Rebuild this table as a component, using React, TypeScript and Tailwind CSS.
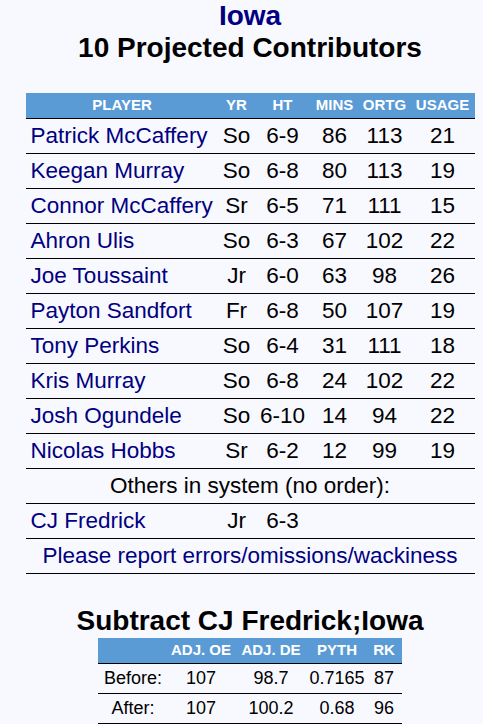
import React from "react";

const players: [string, string, string, string, string, string][] = [
  ["Patrick McCaffery", "So", "6-9", "86", "113", "21"],
  ["Keegan Murray", "So", "6-8", "80", "113", "19"],
  ["Connor McCaffery", "Sr", "6-5", "71", "111", "15"],
  ["Ahron Ulis", "So", "6-3", "67", "102", "22"],
  ["Joe Toussaint", "Jr", "6-0", "63", "98", "26"],
  ["Payton Sandfort", "Fr", "6-8", "50", "107", "19"],
  ["Tony Perkins", "So", "6-4", "31", "111", "18"],
  ["Kris Murray", "So", "6-8", "24", "102", "22"],
  ["Josh Ogundele", "So", "6-10", "14", "94", "22"],
  ["Nicolas Hobbs", "Sr", "6-2", "12", "99", "19"],
];

const colW = ["w-[193px]", "w-[36px]", "w-[56px]", "w-[48px]", "w-[52px]", "w-[64px]"];
const sColW = ["w-[70px]", "w-[66px]", "w-[74px]", "w-[58px]", "w-[36px]"];

export default function App() {
  return (
    <div
      className="w-[483px] h-[724px] overflow-hidden bg-[#f8f8ff] text-black"
      style={{ fontFamily: '"Liberation Sans", Arial, sans-serif' }}
    >
      <div className="w-[500px] flex flex-col items-center">
        <div className="text-[28px] leading-[32px] font-bold text-[#000080] text-center">Iowa</div>
        <div className="text-[28px] leading-[32px] font-bold text-black text-center">10 Projected Contributors</div>

        <div className="mt-[29px] w-[449px] flex flex-col">
          <div className="flex h-[26px] bg-[#5b9bd5] border-b border-black text-white font-bold text-[15px] uppercase">
            {["Player", "Yr", "Ht", "Mins", "ORtg", "Usage"].map((h, i) => (
              <div key={h} className={`${colW[i]} flex items-center justify-center whitespace-nowrap`}>
                {h}
              </div>
            ))}
          </div>
          {players.map((p) => (
            <div key={p[0]} className="flex h-[35px] border-b border-black text-[22.5px]">
              <div className={`${colW[0]} flex items-center pl-[5px] text-[#000080] whitespace-nowrap`}>{p[0]}</div>
              {p.slice(1).map((v, i) => (
                <div key={i} className={`${colW[i + 1]} flex items-center justify-center whitespace-nowrap`}>
                  {v}
                </div>
              ))}
            </div>
          ))}
          <div className="flex h-[35px] border-b border-black text-[22.5px] items-center justify-center">
            Others in system (no order):
          </div>
          <div className="flex h-[35px] border-b border-black text-[22.5px]">
            <div className={`${colW[0]} flex items-center pl-[5px] text-[#000080]`}>CJ Fredrick</div>
            <div className={`${colW[1]} flex items-center justify-center`}>Jr</div>
            <div className={`${colW[2]} flex items-center justify-center`}>6-3</div>
          </div>
          <div className="flex h-[35px] border-b border-black text-[22.5px] items-center justify-center text-[#000080] whitespace-nowrap">
            Please report errors/omissions/wackiness
          </div>
        </div>

        <div className="mt-[31px] text-[28px] leading-[32px] font-bold text-black text-center">
          Subtract CJ Fredrick;Iowa
        </div>

        <div className="mt-[1px] w-[304px] flex flex-col">
          <div className="flex h-[26px] bg-[#5b9bd5] border-b border-black text-white font-bold text-[15px] uppercase">
            {["", "Adj. OE", "Adj. DE", "Pyth", "Rk"].map((h, i) => (
              <div key={i} className={`${sColW[i]} flex items-center justify-center whitespace-nowrap`}>
                {h}
              </div>
            ))}
          </div>
          {[
            ["Before:", "107", "98.7", "0.7165", "87"],
            ["After:", "107", "100.2", "0.68", "96"],
          ].map((r) => (
            <div key={r[0]} className="flex h-[30px] border-b border-black text-[18px]">
              {r.map((v, i) => (
                <div key={i} className={`${sColW[i]} flex items-center justify-center whitespace-nowrap`}>
                  {v}
                </div>
              ))}
            </div>
          ))}
        </div>
      </div>
    </div>
  );
}
